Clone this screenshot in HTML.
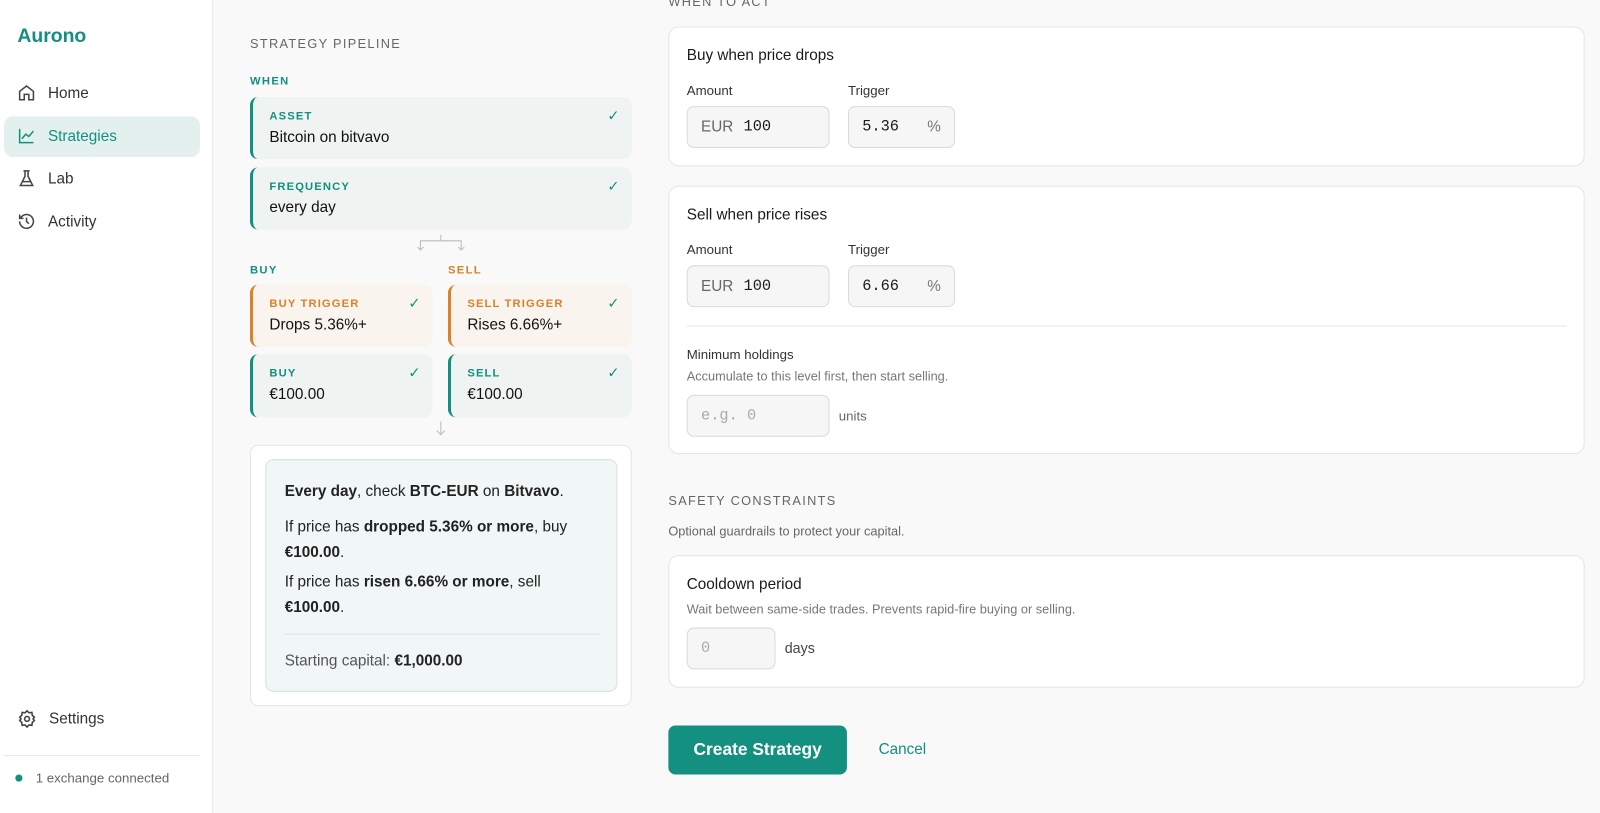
<!DOCTYPE html>
<html><head><meta charset="utf-8"><style>
*{box-sizing:border-box;margin:0;padding:0}
body{width:1600px;height:797px;overflow:hidden;background:#f9f9f9;font-family:"Liberation Sans",sans-serif;color:#1a1a1a;position:relative}
#w{position:absolute;left:0;top:0;width:1568px;height:781px;transform:scale(1.0204);transform-origin:0 0}
.a{position:absolute}
.side{left:0;top:0;width:209px;height:797px;background:#fff;border-right:1px solid #e6e6e6}
.nav{left:17px;font-size:15px;color:#333;display:flex;align-items:center;gap:12px}
.lbl{font-size:12px;letter-spacing:1.3px;font-weight:bold}
.pc{border-radius:8px;border-left:3px solid #13907f;background:#eff3f2}
.pc.o{border-left-color:#d9822b;background:#f9f4ed}
.pc .t{position:absolute;left:16px;top:13px;font-size:11px;letter-spacing:1.1px;font-weight:bold;color:#13907f}
.pc.o .t{color:#d9822b}
.pc .v{position:absolute;left:16px;top:31px;font-size:15px;color:#111}
.pc .c{position:absolute;right:12px;top:10px;color:#13907f;font-size:14px}
.card{background:#fff;border:1px solid #e5e5e5;border-radius:10px}
.in{background:#f6f6f6;border:1px solid #dadada;border-radius:7px;font-family:"Liberation Mono",monospace;font-size:15px;display:flex;align-items:center;padding-left:13px}
.fl{font-size:13px;color:#333}
.mut{font-size:12.5px;color:#777}
</style></head><body><div id="w">
<div class="a side"></div>
<div class="a" style="left:17px;top:25px;font-size:19px;font-weight:bold;color:#13907f">Aurono</div>
<div class="a" style="left:4px;top:114px;width:192px;height:40px;background:#e3f0ed;border-radius:9px"></div>
<div class="a nav" style="top:82px"><svg width="18" height="18" viewBox="0 0 24 24" fill="none" stroke="#444" stroke-width="2"><path d="M3 10l9-7 9 7v11h-6v-7h-6v7H3z"/></svg>Home</div>
<div class="a nav" style="top:124px;color:#13907f"><svg width="18" height="18" viewBox="0 0 24 24" fill="none" stroke="#13907f" stroke-width="2"><path d="M3 3v18h18M6 16l5-6 4 3 6-7"/></svg>Strategies</div>
<div class="a nav" style="top:166px"><svg width="18" height="18" viewBox="0 0 24 24" fill="none" stroke="#444" stroke-width="2"><path d="M8 2h8M10 2v7L4 21h16L14 9V2M6 16h12"/></svg>Lab</div>
<div class="a nav" style="top:208px"><svg width="18" height="18" viewBox="0 0 24 24" fill="none" stroke="#444" stroke-width="2"><path d="M3 12a9 9 0 1 0 3-6.7L3 8M3 3v5h5M12 7v5l3 3"/></svg>Activity</div>
<div class="a nav" style="top:695px"><svg width="19" height="19" viewBox="0 0 24 24" fill="none" stroke="#444" stroke-width="2"><circle cx="12" cy="12" r="3"/><path d="M12 2l2.5 2.5 3.5-.5.5 3.5L21 10l-1.5 2 1.5 2-2.5 2.5-.5 3.5-3.5-.5L12 22l-2.5-2.5-3.5.5-.5-3.5L3 14l1.5-2L3 10l2.5-2.5.5-3.5 3.5.5z"/></svg>Settings</div>
<div class="a" style="left:4px;top:740px;width:192px;height:1px;background:#e6e6e6"></div>
<div class="a" style="left:15px;top:759px;width:7px;height:7px;border-radius:50%;background:#13907f"></div>
<div class="a" style="left:35px;top:755px;font-size:13px;color:#666">1 exchange connected</div>

<div class="a lbl" style="left:245px;top:36px;color:#666;font-weight:normal;font-size:12.5px">STRATEGY PIPELINE</div>
<div class="a lbl" style="left:245px;top:74px;color:#13907f;font-size:11px">WHEN</div>
<div class="a pc" style="left:245px;top:95px;width:374px;height:61px"><div class="t">ASSET</div><div class="v">Bitcoin on bitvavo</div><div class="c">✓</div></div>
<div class="a pc" style="left:245px;top:164px;width:374px;height:61px"><div class="t">FREQUENCY</div><div class="v">every day</div><div class="c">✓</div></div>
<svg class="a" style="left:405px;top:229px" width="55" height="20" viewBox="0 0 55 20" fill="none" stroke="#bbb" stroke-width="1"><path d="M27 1v6M7 16V7h40v9M4 13l3 3 3-3M44 13l3 3 3-3"/></svg>
<div class="a lbl" style="left:245px;top:259px;color:#13907f;font-size:11px">BUY</div>
<div class="a lbl" style="left:439px;top:259px;color:#d9822b;font-size:11px">SELL</div>
<div class="a pc o" style="left:245px;top:279px;width:179px;height:61px"><div class="t">BUY TRIGGER</div><div class="v">Drops 5.36%+</div><div class="c">✓</div></div>
<div class="a pc o" style="left:439px;top:279px;width:180px;height:61px"><div class="t">SELL TRIGGER</div><div class="v">Rises 6.66%+</div><div class="c">✓</div></div>
<div class="a pc" style="left:245px;top:347px;width:179px;height:62px"><div class="t">BUY</div><div class="v">€100.00</div><div class="c">✓</div></div>
<div class="a pc" style="left:439px;top:347px;width:180px;height:62px"><div class="t">SELL</div><div class="v">€100.00</div><div class="c">✓</div></div>
<svg class="a" style="left:426px;top:412px" width="12" height="16" fill="none" stroke="#bbb"><path d="M6 1v13M2 10l4 4 4-4"/></svg>
<div class="a card" style="left:245px;top:436px;width:374px;height:256px;border-radius:8px"></div>
<div class="a" style="left:260px;top:450px;width:345px;height:228px;background:#f1f6f6;border:1px solid #d5e3e1;border-radius:8px;font-size:15px;color:#222;line-height:25px">
<div style="position:absolute;left:18px;top:18px;width:310px"><b>Every day</b>, check <b>BTC-EUR</b> on <b>Bitvavo</b>.</div>
<div style="position:absolute;left:18px;top:53px;width:310px">If price has <b>dropped 5.36% or more</b>, buy <b>€100.00</b>.</div>
<div style="position:absolute;left:18px;top:107px;width:310px">If price has <b>risen 6.66% or more</b>, sell <b>€100.00</b>.</div>
<div style="position:absolute;left:18px;top:170px;width:310px;height:1px;background:#dfe8e6"></div>
<div style="position:absolute;left:18px;top:184px;color:#555">Starting capital: <b style="color:#222">€1,000.00</b></div>
</div>

<div class="a" style="left:655px;top:-5px;font-size:12.5px;letter-spacing:1.3px;color:#666">WHEN TO ACT</div>
<div class="a card" style="left:655px;top:26px;width:898px;height:137px"></div>
<div class="a" style="left:673px;top:46px;font-size:15px">Buy when price drops</div>
<div class="a fl" style="left:673px;top:81px">Amount</div><div class="a fl" style="left:831px;top:81px">Trigger</div>
<div class="a in" style="left:673px;top:104px;width:140px;height:41px"><span style="font-family:'Liberation Sans';color:#666;margin-right:10px">EUR</span>100</div>
<div class="a in" style="left:831px;top:104px;width:105px;height:41px">5.36<span style="position:absolute;right:13px;font-family:'Liberation Sans';color:#777">%</span></div>

<div class="a card" style="left:655px;top:182px;width:898px;height:263px"></div>
<div class="a" style="left:673px;top:202px;font-size:15px">Sell when price rises</div>
<div class="a fl" style="left:673px;top:237px">Amount</div><div class="a fl" style="left:831px;top:237px">Trigger</div>
<div class="a in" style="left:673px;top:260px;width:140px;height:41px"><span style="font-family:'Liberation Sans';color:#666;margin-right:10px">EUR</span>100</div>
<div class="a in" style="left:831px;top:260px;width:105px;height:41px">6.66<span style="position:absolute;right:13px;font-family:'Liberation Sans';color:#777">%</span></div>
<div class="a" style="left:673px;top:319px;width:862px;height:1px;background:#e6e6e6"></div>
<div class="a fl" style="left:673px;top:340px">Minimum holdings</div>
<div class="a mut" style="left:673px;top:362px">Accumulate to this level first, then start selling.</div>
<div class="a in" style="left:673px;top:387px;width:140px;height:41px;color:#aaa">e.g. 0</div>
<div class="a fl" style="left:822px;top:400px;color:#666">units</div>

<div class="a" style="left:655px;top:484px;font-size:12.5px;letter-spacing:1.3px;color:#666">SAFETY CONSTRAINTS</div>
<div class="a mut" style="left:655px;top:514px;color:#666">Optional guardrails to protect your capital.</div>
<div class="a card" style="left:655px;top:544px;width:898px;height:130px"></div>
<div class="a" style="left:673px;top:564px;font-size:15px">Cooldown period</div>
<div class="a mut" style="left:673px;top:590px">Wait between same-side trades. Prevents rapid-fire buying or selling.</div>
<div class="a in" style="left:673px;top:615px;width:87px;height:41px;color:#aaa">0</div>
<div class="a" style="left:769px;top:627px;font-size:14px;color:#444">days</div>
<div class="a" style="left:655px;top:711px;width:175px;height:48px;background:#13907f;border-radius:7px;color:#fff;font-size:17px;font-weight:bold;display:flex;align-items:center;justify-content:center">Create Strategy</div>
<div class="a" style="left:861px;top:726px;font-size:15px;color:#13907f">Cancel</div>
</div></body></html>
